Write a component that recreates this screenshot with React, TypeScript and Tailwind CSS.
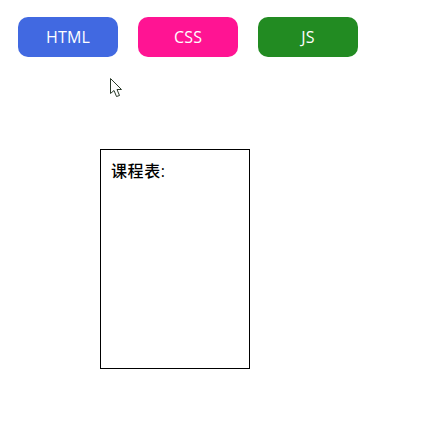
export default function App() {
  const tabs = [
    { name: 'HTML', color: 'bg-[#4169e1]' },
    { name: 'CSS', color: 'bg-[#ff1493]' },
    { name: 'JS', color: 'bg-[#228b22]' },
  ];

  return (
    <div className="relative h-[438px] w-[446px] overflow-hidden bg-white font-['Open_Sans','Noto_Sans_CJK_SC',sans-serif]">
      <div className="flex gap-5 pl-[18px] pt-[17px]">
        {tabs.map((tab) => (
          <button
            key={tab.name}
            className={`h-10 w-[100px] rounded-[10px] text-center text-[16px] tracking-[0.2px] text-white ${tab.color}`}
          >
            {tab.name}
          </button>
        ))}
      </div>
      <div className="ml-[100px] mt-[92px] h-[220px] w-[150px] border border-black p-[10px] text-base font-medium leading-[22px] tracking-[0.6px] text-black">
        课程表:
      </div>
      {/* mouse pointer */}
      <svg className="absolute left-[110px] top-[78px]" width="14" height="20" viewBox="0 0 14 20">
        <path
          d="M0.5 0.5V15.5L4 12.5L6.5 18.5L9.5 17.5L7 11.5H11.5Z"
          fill="#fff"
          stroke="#2a3a2a"
          strokeWidth="1"
        />
      </svg>
    </div>
  );
}
